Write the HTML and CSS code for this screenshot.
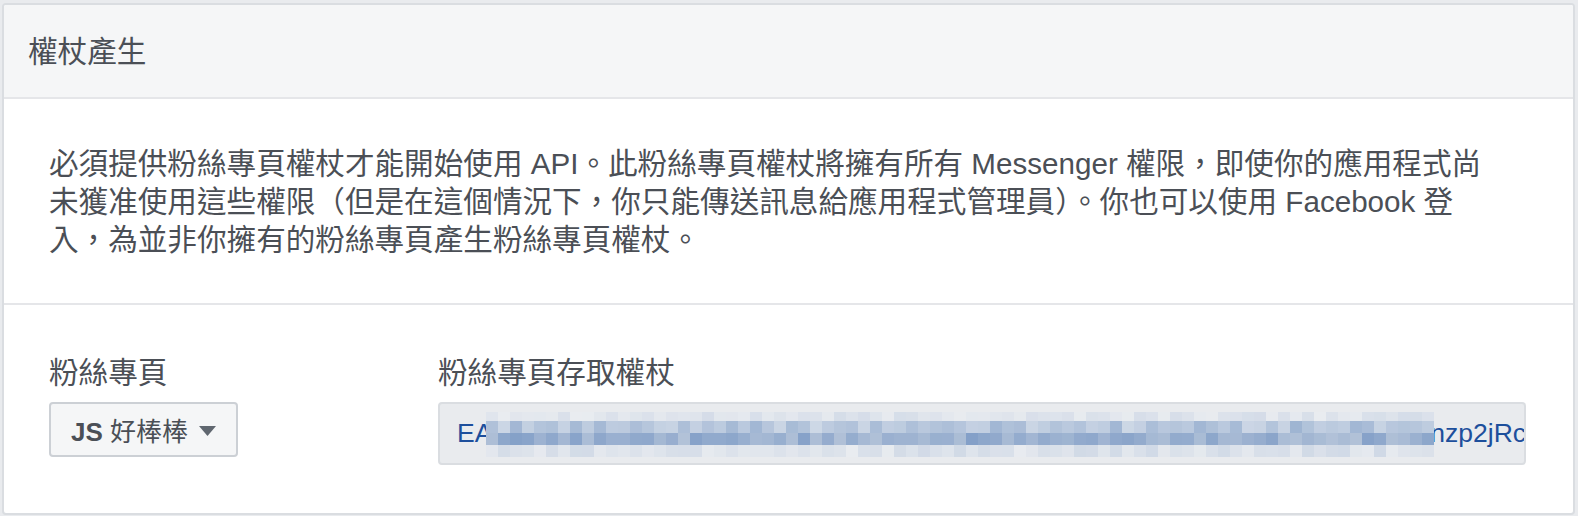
FILE: index.html
```html
<!DOCTYPE html>
<html lang="zh-Hant">
<head>
<meta charset="utf-8">
<title>權杖產生</title>
<link rel="stylesheet" href="styles.css">
</head>
<body>
<div class="card">
  <div class="card-header">權杖產生</div>
  <div class="card-desc">必須提供粉絲專頁權杖才能開始使用 API。此粉絲專頁權杖將擁有所有 Messenger 權限，即使你的應用程式尚<br>未獲准使用這些權限（但是在這個情況下，你只能傳送訊息給應用程式管理員）。你也可以使用 Facebook 登<br>入，為並非你擁有的粉絲專頁產生粉絲專頁權杖。</div>
  <div class="card-form">
    <div class="field">
      <div class="field-label">粉絲專頁</div>
      <button class="select" type="button"><span class="select-text"><b>JS</b> 好棒棒</span><svg class="caret" width="17" height="10" viewBox="0 0 17 10"><path d="M0 0H17L8.5 10Z" fill="#606770"/></svg></button>
    </div>
    <div class="field">
      <div class="field-label">粉絲專頁存取權杖</div>
      <div class="token">
        <span class="token-start">EA</span>
        <div class="blur" id="blur"></div>
        <span class="token-end">nzp2jRc</span>
      </div>
    </div>
  </div>
</div>
<script src="script.js"></script>
</body>
</html>
```
FILE: styles.css
```css
html, body {
  margin: 0;
  padding: 0;
}
body {
  background: #e9ebee;
  font-family: "Liberation Sans", "Noto Sans CJK TC", sans-serif;
  color: #4b4f56;
  width: 1578px;
  height: 516px;
  overflow: hidden;
}
.card {
  margin: 3px 3px 0 2px;
  background: #fff;
  border: 2px solid #dadde1;
  border-radius: 4px;
  overflow: hidden;
}
.card-header {
  background: #f5f6f7;
  border-bottom: 2px solid #e5e6e9;
  font-size: 29.6px;
  line-height: 38px;
  padding: 28px 24px 26px;
  color: #4b4f56;
}
.card-desc {
  font-size: 29.6px;
  line-height: 38px;
  padding: 46px 45px 44px;
  border-bottom: 2px solid #e5e6e9;
  white-space: nowrap;
}
.card-form {
  display: grid;
  grid-template-columns: 389px 1088px;
  padding: 49px 45px 48px;
}
.field-label {
  font-size: 29.6px;
  line-height: 38px;
  margin-bottom: 10px;
}
.select {
  display: flex;
  align-items: center;
  height: 55px;
  box-sizing: border-box;
  padding: 0 20px 0 20px;
  background: #f5f6f7;
  border: 2px solid #ccd0d5;
  border-radius: 4px;
  font-family: inherit;
  color: #4b4f56;
  font-size: 26px;
  cursor: pointer;
}
.select-text {
  white-space: nowrap;
}
.select-text b {
  font-weight: 700;
}
.caret {
  margin-left: 11px;
  margin-top: 2px;
}
.token {
  display: flex;
  align-items: center;
  height: 63px;
  box-sizing: border-box;
  background: #e9ebee;
  border: 2px solid #dadde1;
  border-radius: 4px;
  padding: 0 0 0 17px;
  overflow: hidden;
  font-size: 26.5px;
  color: #1d4f9c;
  white-space: nowrap;
}
.token-start {
  flex: none;
}
.blur {
  flex: none;
  position: relative;
  z-index: 1;
  margin-left: -6px;
  display: grid;
  grid-template-columns: repeat(79, 12px);
  grid-template-rows: 9px 12px 12px 12px;
  margin-top: 2px;
}
.token-end {
  flex: none;
  margin-left: -4px;
}
```
FILE: script.js
```js
(function () {
  var blur = document.getElementById('blur');
  var seed = 12345;
  function rnd() {
    seed = (seed * 9301 + 49297) % 233280;
    return seed / 233280;
  }
  var rows = [
    { a: [233, 236, 240], b: [212, 220, 232] },
    { a: [206, 216, 230], b: [158, 180, 210] },
    { a: [178, 194, 216], b: [132, 160, 200] },
    { a: [233, 236, 240], b: [208, 217, 230] }
  ];
  for (var r = 0; r < rows.length; r++) {
    for (var c = 0; c < 79; c++) {
      var t = rnd();
      var a = rows[r].a, b = rows[r].b;
      var col = 'rgb(' + Math.round(a[0] + (b[0] - a[0]) * t) + ',' +
        Math.round(a[1] + (b[1] - a[1]) * t) + ',' +
        Math.round(a[2] + (b[2] - a[2]) * t) + ')';
      var d = document.createElement('div');
      d.style.background = col;
      blur.appendChild(d);
    }
  }
})();
```
